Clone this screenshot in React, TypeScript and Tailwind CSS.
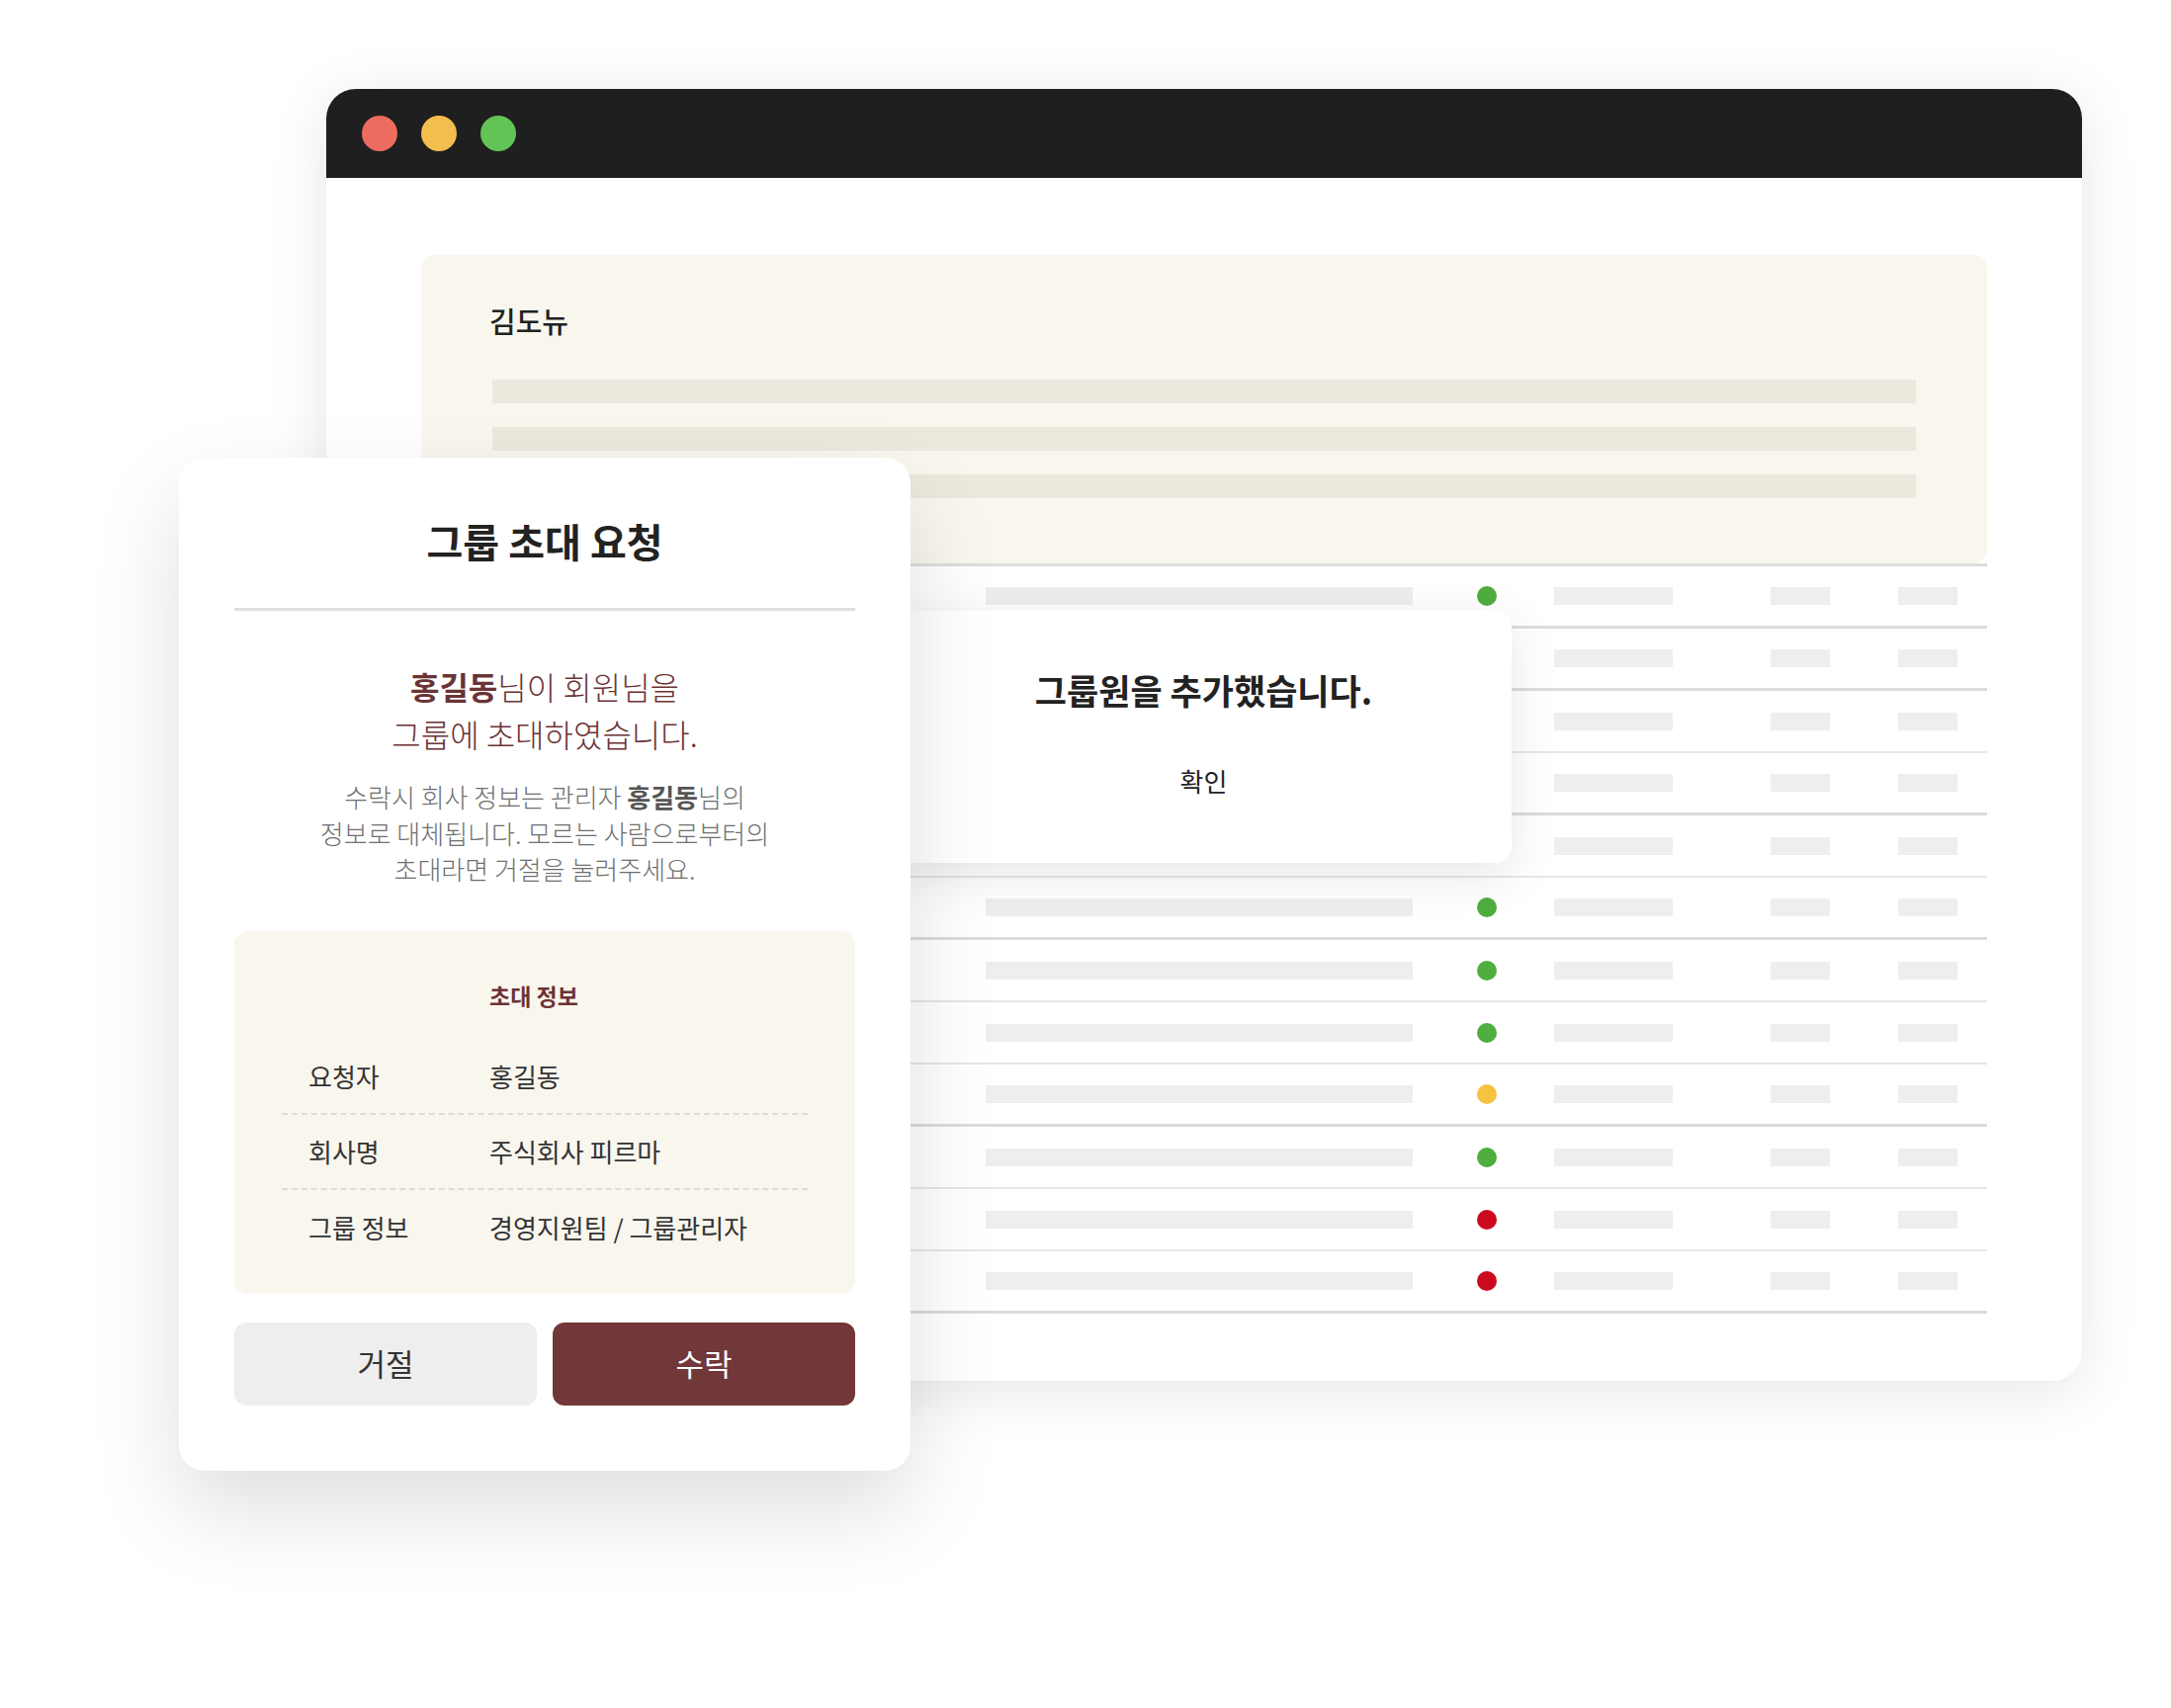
const dots = ['#4fae3f', '#4fae3f', '#4fae3f', '#4fae3f', '#4fae3f', '#4fae3f', '#4fae3f', '#4fae3f', '#f5c242', '#4fae3f', '#cc0a1e', '#cc0a1e'];
const thick = [true, true, false, true, false, true, false, false, true, false, false, true];

function TableRow({ color, heavy }: { color: string; heavy: boolean }) {
  return (
    <div
      className={`flex items-center h-[63px] pl-[571px] ${
        heavy ? 'border-b-[3px] border-[#dcdcdc]' : 'border-b-2 border-[#e6e6e6]'
      }`}
    >
      <div className="w-[432px] h-[18px] bg-[#eeeeee]" />
      <div className="ml-[65px] w-[20px] h-[20px] rounded-full" style={{ backgroundColor: color }} />
      <div className="ml-[58px] w-[120px] h-[18px] bg-[#eeeeee]" />
      <div className="ml-[99px] w-[60px] h-[18px] bg-[#eeeeee]" />
      <div className="ml-[69px] w-[60px] h-[18px] bg-[#eeeeee]" />
    </div>
  );
}

function BrowserWindow() {
  return (
    <div className="absolute left-[330px] top-[90px] w-[1776px] h-[1307px] bg-white rounded-[30px] shadow-[0_10px_60px_rgba(0,0,0,0.10)] flex flex-col">
      <div className="h-[90px] bg-[#1f1f1f] rounded-t-[30px] flex items-center pl-[36px] gap-[24px]">
        <div className="w-[36px] h-[36px] rounded-full bg-[#ee6b60]" />
        <div className="w-[36px] h-[36px] rounded-full bg-[#f4be4f]" />
        <div className="w-[36px] h-[36px] rounded-full bg-[#62c454]" />
      </div>

      <div className="px-[96px] pt-[78px]">
        <div className="bg-[#f9f6ee] rounded-[14px] px-[72px] pt-[49px] pb-[66px]">
          <p className="text-[29px] leading-[35px] font-medium text-[#222] -ml-[3px]">김도뉴</p>
          <div className="mt-[42px] flex flex-col gap-[24px]">
            <div className="h-[24px] bg-[#ede8dd]" />
            <div className="h-[24px] bg-[#ede8dd]" />
            <div className="h-[24px] bg-[#ede8dd]" />
          </div>
        </div>
        <div className="h-[3px] bg-[#dcdcdc]" />
        {dots.map((c, i) => (
          <TableRow key={i} color={c} heavy={thick[i]} />
        ))}
      </div>
    </div>
  );
}

function InviteModal() {
  const rows = [
    ['요청자', '홍길동'],
    ['회사명', '주식회사 피르마'],
    ['그룹 정보', '경영지원팀 / 그룹관리자'],
  ];
  return (
    <div className="absolute left-[181px] top-[463px] w-[740px] bg-white rounded-[26px] shadow-[0_40px_90px_rgba(0,0,0,0.13)] px-[56px] pt-[60px] pb-[66px]">
      <h2 className="text-center text-[40px] leading-[48px] font-bold text-[#222]">그룹 초대 요청</h2>
      <div className="mt-[44px] h-[3px] bg-[#dedede]" />

      <p className="mt-[52px] text-center text-[32px] leading-[48px] font-light text-[#6b3335]">
        <span className="font-bold">홍길동</span>님이 회원님을
        <br />
        그룹에 초대하였습니다.
      </p>
      <p className="mt-[22px] text-center text-[26px] leading-[36.5px] font-light text-[#6f6f6f]">
        수락시 회사 정보는 관리자 <span className="font-bold text-[#555]">홍길동</span>님의
        <br />
        정보로 대체됩니다. 모르는 사람으로부터의
        <br />
        초대라면 거절을 눌러주세요.
      </p>

      <div className="mt-[44px] bg-[#f9f6ee] rounded-[14px] pt-[51px] pb-[29px]">
        <div className="mx-[48px]">
          <div className="grid grid-cols-[210px_1fr]">
            <div />
            <p className="text-[23px] leading-[29px] font-bold text-[#6b3335]">초대 정보</p>
          </div>
          <div className="mt-[30px]">
            {rows.map(([label, value], i) => (
              <div
                key={label}
                className={`grid grid-cols-[210px_1fr] items-center h-[76px] text-[26px] text-[#333] ${
                  i < rows.length - 1 ? 'border-b-2 border-dashed border-[#dcdcdc]' : ''
                }`}
              >
                <span className="pl-[27px]">{label}</span>
                <span>{value}</span>
              </div>
            ))}
          </div>
        </div>
      </div>

      <div className="mt-[29px] grid grid-cols-2 gap-[16px]">
        <button className="h-[84px] rounded-[12px] bg-[#eeeeee] text-[31px] text-[#333]">거절</button>
        <button className="h-[84px] rounded-[12px] bg-[#713739] text-[31px] text-white">수락</button>
      </div>
    </div>
  );
}

function Toast() {
  return (
    <div className="absolute left-[906px] top-[618px] w-[623px] h-[255px] bg-white rounded-[16px] shadow-[0_12px_50px_rgba(0,0,0,0.10)] flex flex-col items-center">
      <p className="mt-[60px] text-[35px] leading-[40px] font-semibold text-[#222]">그룹원을 추가했습니다.</p>
      <p className="mt-[56px] text-[26px] leading-[32px] text-[#222]">확인</p>
    </div>
  );
}

export default function App() {
  return (
    <div className="relative w-[2196px] h-[1728px] bg-white overflow-hidden font-[family-name:'Noto_Sans_CJK_KR','Noto_Sans',sans-serif]">
      <BrowserWindow />
      <Toast />
      <InviteModal />
    </div>
  );
}
